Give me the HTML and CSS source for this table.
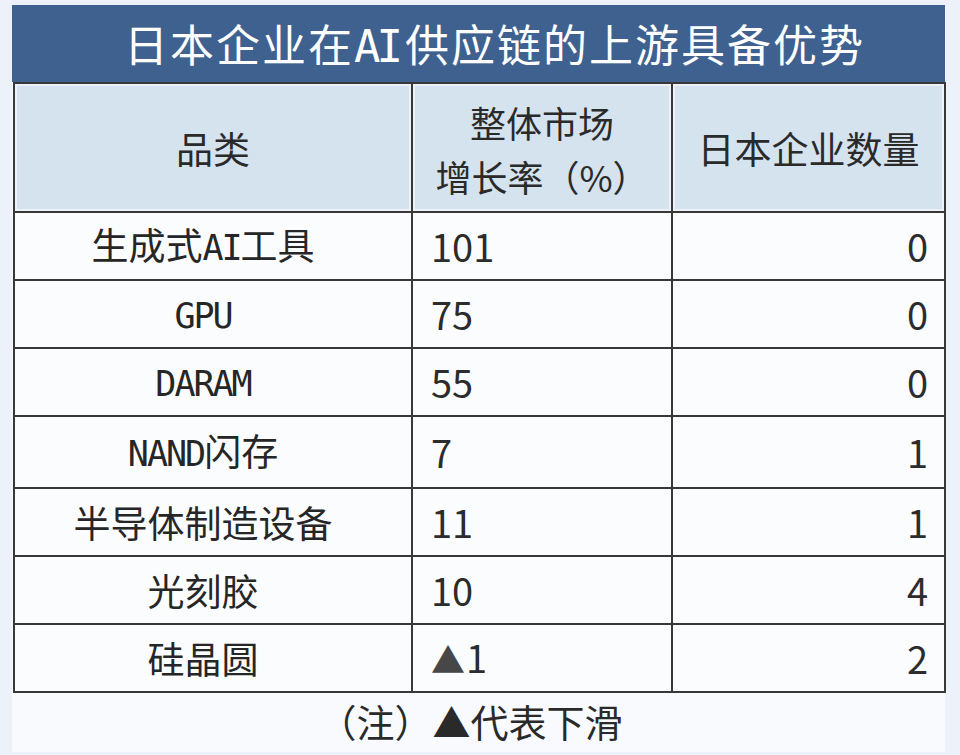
FILE: index.html
```html
<!DOCTYPE html>
<html lang="zh-CN">
<head>
<meta charset="utf-8">
<title>日本企业在AI供应链的上游具备优势</title>
<link rel="stylesheet" href="styles.css">
</head>
<body>
<div class="panel">
  <h1 class="title">日本企业在<span class="lat">AI</span>供应链的上游具备优势</h1>
  <table class="grid">
    <colgroup>
      <col class="c1">
      <col class="c2">
      <col class="c3">
    </colgroup>
    <thead>
      <tr>
        <th>品类</th>
        <th class="two">整体市场<br>增长率（%）</th>
        <th>日本企业数量</th>
      </tr>
    </thead>
    <tbody>
      <tr><td class="name">生成式<span class="lat">AI</span>工具</td><td class="num">101</td><td class="cnt">0</td></tr>
      <tr><td class="name"><span class="lat">GPU</span></td><td class="num">75</td><td class="cnt">0</td></tr>
      <tr><td class="name"><span class="lat">DARAM</span></td><td class="num">55</td><td class="cnt">0</td></tr>
      <tr class="tall"><td class="name"><span class="lat">NAND</span>闪存</td><td class="num">7</td><td class="cnt">1</td></tr>
      <tr><td class="name">半导体制造设备</td><td class="num">11</td><td class="cnt">1</td></tr>
      <tr><td class="name">光刻胶</td><td class="num">10</td><td class="cnt">4</td></tr>
      <tr><td class="name">硅晶圆</td><td class="num"><span class="tri">▲</span>1</td><td class="cnt">2</td></tr>
    </tbody>
  </table>
  <p class="note">（注）▲代表下滑</p>
</div>
</body>
</html>
```
FILE: styles.css
```css
html, body {
  margin: 0;
  padding: 0;
}
body {
  background: #edf1f9;
  font-family: "Noto Sans CJK SC", "Noto Sans", sans-serif;
  color: #262626;
}
.panel {
  margin: 5px 0 0 12px;
  width: 933px;
  height: 747px;
  background: #f8fafd;
  display: flex;
  flex-direction: column;
}
.title {
  margin: 0;
  height: 77px;
  background: #3e6190;
  color: #ffffff;
  font-weight: 400;
  font-size: 44px;
  letter-spacing: 2px;
  line-height: 77px;
  text-align: center;
  padding-left: 32px;
  box-sizing: border-box;
  white-space: nowrap;
}
.lat {
  font-family: "DejaVu Sans Mono", monospace;
  letter-spacing: -2px;
}
.title .lat {
  letter-spacing: -4px;
  margin-right: 6px;
}
.grid {
  border-collapse: collapse;
  margin: 0 1px;
  width: 931px;
  table-layout: fixed;
}
.c1 { width: 398px; }
.c2 { width: 260px; }
.c3 { width: 273px; }
.grid th,
.grid td {
  border: 2px solid #383838;
  padding: 0;
  font-weight: 400;
}
.grid th {
  height: 125px;
  background: #d5e3ef;
  box-shadow: inset 0 0 0 2px rgba(255, 255, 255, 0.55);
  font-size: 37px;
  line-height: 54px;
  text-align: center;
  vertical-align: middle;
  color: #2a2a2a;
}
.grid th.two {
  font-size: 36px;
  padding-top: 2px;
}
.grid td {
  height: 66px;
  background: #fbfcfe;
  font-size: 37px;
  line-height: 40px;
  vertical-align: middle;
}
.grid tr.tall td {
  height: 70px;
}
.grid td.name {
  text-align: center;
  padding-right: 20px;
}
.grid td .lat {
  font-size: 35px;
}
.grid td.num {
  text-align: left;
  padding-left: 18px;
  font-size: 38px;
  color: #2c2c2c;
}
.grid td.cnt {
  text-align: right;
  padding-right: 16px;
  font-size: 38px;
  color: #2c2c2c;
}
.tri {
  color: #474747;
  font-size: 34px;
  margin-right: 1px;
}
.note {
  margin: 0;
  flex: 1;
  display: flex;
  align-items: center;
  justify-content: center;
  font-size: 38px;
  color: #2a2a2a;
  padding-right: 16px;
  padding-bottom: 4px;
}
```
